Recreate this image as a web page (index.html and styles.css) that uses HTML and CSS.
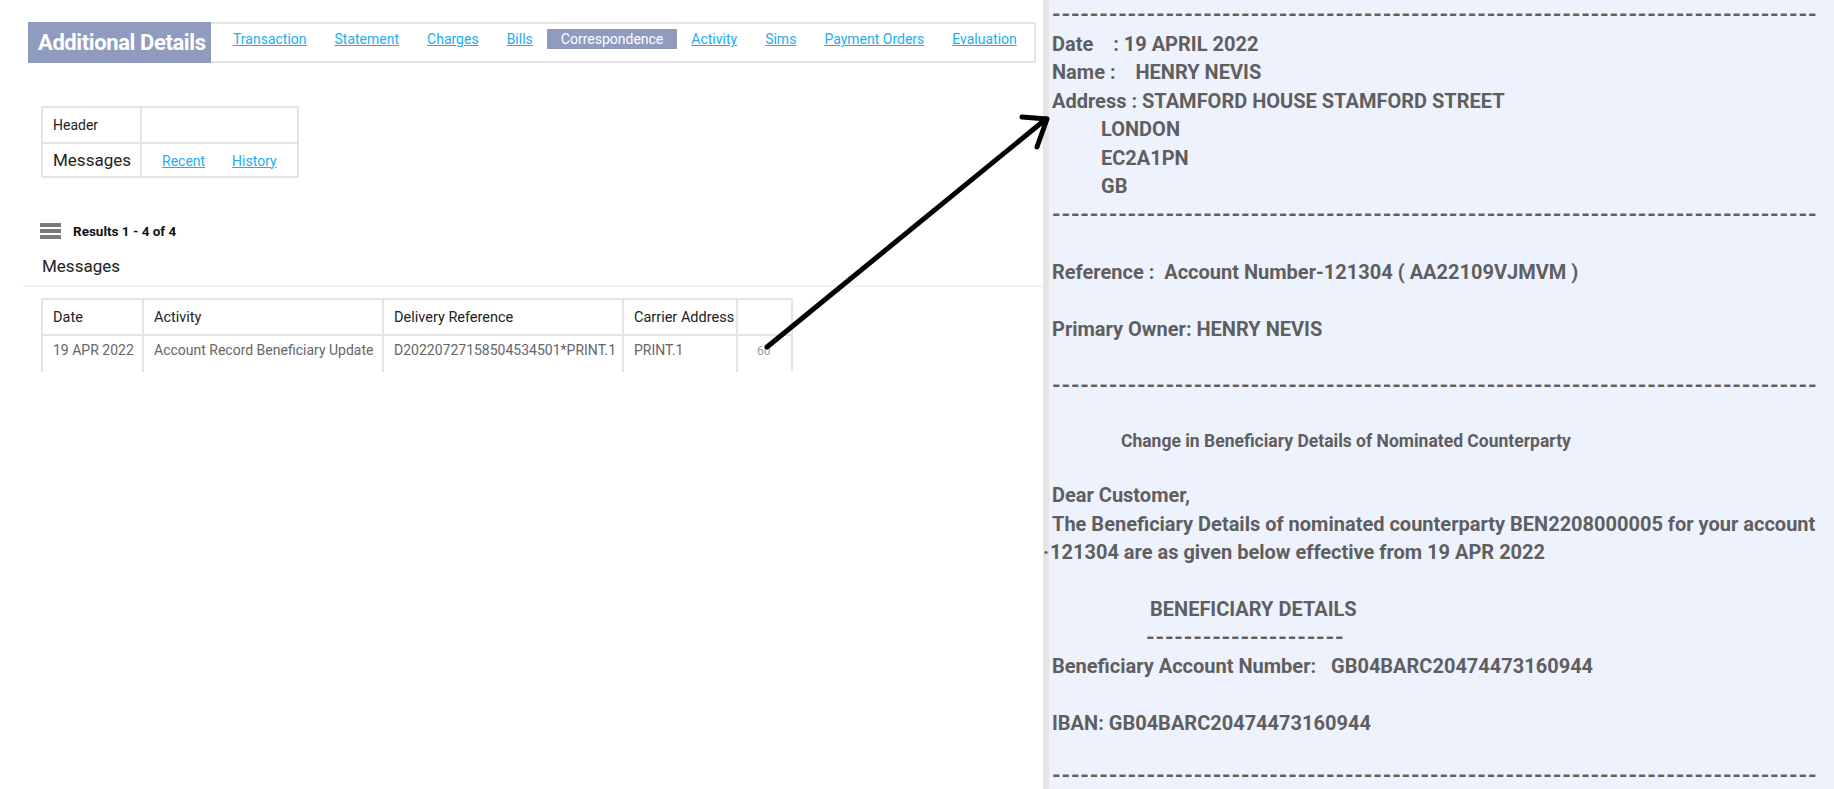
FILE: index.html
```html
<!DOCTYPE html>
<html>
<head>
  <meta charset="UTF-8">
  <title>Additional Details - Correspondence</title>
  <link rel="stylesheet" href="styles.css">
</head>
<body>
  <div class="screen">
    <div class="app">
      <div class="tabs">
        <div class="tabs-title">Additional Details</div>
        <div class="tab-links">
          <a href="#" class="tab-link">Transaction</a>
          <a href="#" class="tab-link">Statement</a>
          <a href="#" class="tab-link">Charges</a>
          <a href="#" class="tab-link">Bills</a>
          <a href="#" class="tab-link active">Correspondence</a>
          <a href="#" class="tab-link">Activity</a>
          <a href="#" class="tab-link">Sims</a>
          <a href="#" class="tab-link">Payment Orders</a>
          <a href="#" class="tab-link">Evaluation</a>
        </div>
      </div>

      <table class="header-table">
        <tr class="row-header">
          <td class="label">Header</td>
          <td></td>
        </tr>
        <tr class="row-messages">
          <td class="label big">Messages</td>
          <td class="links">
            <a href="#">Recent</a>
            <a href="#">History</a>
          </td>
        </tr>
      </table>

      <div class="results">
        <span class="menu-icon"><i></i><i></i><i></i></span>
        <span class="results-text">Results 1 - 4 of 4</span>
      </div>

      <div class="section-title">Messages</div>

      <table class="messages">
        <colgroup>
          <col class="c-date">
          <col class="c-activity">
          <col class="c-ref">
          <col class="c-carrier">
          <col class="c-extra">
        </colgroup>
        <tr>
          <th>Date</th>
          <th>Activity</th>
          <th>Delivery Reference</th>
          <th>Carrier Address</th>
          <th></th>
        </tr>
        <tr>
          <td>19 APR 2022</td>
          <td>Account Record Beneficiary Update</td>
          <td>D20220727158504534501*PRINT.1</td>
          <td>PRINT.1</td>
          <td class="small">60</td>
        </tr>
      </table>
    </div>

    <div class="letter">
      <div class="ln dashes">---------------------------------------------------------------------------------</div>
      <div class="ln">Date    : 19 APRIL 2022</div>
      <div class="ln">Name :    HENRY NEVIS</div>
      <div class="ln">Address : STAMFORD HOUSE STAMFORD STREET</div>
      <div class="ln ind-1">LONDON</div>
      <div class="ln ind-1">EC2A1PN</div>
      <div class="ln ind-1">GB</div>
      <div class="ln dashes">---------------------------------------------------------------------------------</div>
      <div class="ln"></div>
      <div class="ln">Reference :  Account Number-121304 ( AA22109VJMVM )</div>
      <div class="ln"></div>
      <div class="ln">Primary Owner: HENRY NEVIS</div>
      <div class="ln"></div>
      <div class="ln dashes">---------------------------------------------------------------------------------</div>
      <div class="ln"></div>
      <div class="ln subject">Change in Beneficiary Details of Nominated Counterparty</div>
      <div class="ln"></div>
      <div class="ln">Dear Customer,</div>
      <div class="ln">The Beneficiary Details of nominated counterparty BEN2208000005 for your account</div>
      <div class="ln"><span class="stray">·</span>121304 are as given below effective from 19 APR 2022</div>
      <div class="ln"></div>
      <div class="ln ind-2">BENEFICIARY DETAILS</div>
      <div class="ln dashes ind-3">---------------------</div>
      <div class="ln">Beneficiary Account Number:   GB04BARC20474473160944</div>
      <div class="ln"></div>
      <div class="ln">IBAN: GB04BARC20474473160944</div>
      <div class="ln"></div>
      <div class="ln dashes last">---------------------------------------------------------------------------------</div>
    </div>

    <!-- hand drawn arrow pointing at the message -->
    <svg class="arrow" width="1834" height="789" viewBox="0 0 1834 789">
      <path d="M767 347 L1046 119" />
      <path d="M1022 117 L1047 119 L1037 147" />
    </svg>
  </div>
</body>
</html>
```

FILE: styles.css
```css
body {
  margin: 0;
  font-family: Roboto, 'Liberation Sans', sans-serif;
  background-color: #FFFFFF;
  color: #222222;
}

.screen {
  position: relative;
  display: flex;
  width: 1834px;
  height: 789px;
  overflow: hidden;
}

.app {
  width: 1043px;
  flex: 0 0 1043px;
  padding-top: 22px;
  box-sizing: border-box;
}

/* tabs */

.tabs {
  display: flex;
  margin-left: 28px;
  width: 1008px;
  height: 41px;
  border: 2px solid #E4E4E4;
  box-sizing: border-box;
}

.tabs-title {
  margin: -2px 0 -2px -2px;
  width: 183px;
  padding-left: 10px;
  box-sizing: border-box;
  background-color: #8F9CC0;
  color: #FFFFFF;
  font-size: 22px;
  font-weight: bold;
  letter-spacing: -0.4px;
  line-height: 41px;
}

.tab-links {
  display: flex;
  align-items: flex-start;
  padding-top: 5px;
  margin-left: 8px;
}

.tab-link {
  padding: 0 14px;
  height: 20px;
  line-height: 20px;
  font-size: 14px;
  color: #22AEEF;
  text-decoration: underline;
}

.tab-link.active {
  background-color: #8F9CC0;
  color: #FFFFFF;
  text-decoration: none;
}

/* header table */

.header-table {
  margin: 43px 0 0 41px;
  border-collapse: collapse;
  width: 258px;
}

.header-table td {
  border: 2px solid #E4E4E4;
  padding: 0 0 0 10px;
  white-space: nowrap;
}

.header-table .row-header td {
  height: 34px;
  font-size: 14px;
}

.header-table .row-messages td {
  height: 32px;
}

.header-table .label {
  width: 87px;
}

.header-table .big {
  font-size: 17px;
}

.header-table .links {
  padding-left: 20px;
}

.header-table .links a {
  font-size: 14px;
  color: #22AEEF;
}

.header-table .links a + a {
  margin-left: 23px;
}

/* results */

.results {
  display: flex;
  align-items: center;
  gap: 12px;
  margin: 45px 0 0 40px;
}

.menu-icon {
  display: flex;
  flex-direction: column;
  gap: 2px;
  width: 21px;
}

.menu-icon i {
  display: block;
  height: 4px;
  background-color: #7A7A7A;
}

.results-text {
  font-size: 13.5px;
  font-weight: bold;
  color: #111111;
}

.section-title {
  margin: 16px 0 0 23px;
  padding: 0 0 8px 19px;
  font-size: 17px;
  line-height: 22px;
  border-bottom: 2px solid #F2F2F2;
}

/* messages table */

.messages {
  margin: 11px 0 0 41px;
  border-collapse: collapse;
  table-layout: fixed;
  width: 750px;
}

.c-date { width: 101px; }
.c-activity { width: 240px; }
.c-ref { width: 240px; }
.c-carrier { width: 114px; }
.c-extra { width: 55px; }

.messages th,
.messages td {
  border: 2px solid #E4E4E4;
  padding: 0 0 0 10px;
  text-align: left;
  white-space: nowrap;
  overflow: hidden;
}

.messages th {
  height: 34px;
  font-size: 14.5px;
  font-weight: normal;
  color: #222222;
}

.messages td {
  height: 28px;
  padding-top: 6px;
  vertical-align: top;
  border-bottom: none;
  font-size: 14px;
  color: #666666;
}

.messages td.small {
  padding-left: 19px;
  padding-top: 8px;
  font-size: 12px;
  color: #9A9A9A;
}

/* letter screenshot */

.letter {
  flex: 1;
  padding: 1px 0 0 3px;
  border-left: 6px solid #E5E5E5;
  background-color: #EEF2FD;
  color: #5F5F5F;
  font-size: 20px;
  font-weight: bold;
}

.ln {
  height: 28.5px;
  line-height: 28.5px;
  white-space: pre;
}

.dashes {
  font-size: 22px;
  letter-spacing: 0.78px;
}

.dashes.last {
  height: 20px;
  line-height: 20px;
}

.ind-1 { padding-left: 49px; }
.ind-2 { padding-left: 98px; }
.ind-3 { padding-left: 94px; }

.subject {
  height: 24px;
  line-height: 24px;
  padding-left: 69px;
  font-size: 17.5px;
}

.stray {
  margin-left: -9px;
  margin-right: 1px;
}

.arrow {
  position: absolute;
  left: 0;
  top: 0;
  pointer-events: none;
}

.arrow path {
  fill: none;
  stroke: #000000;
  stroke-width: 5;
  stroke-linecap: round;
  stroke-linejoin: round;
}
```
